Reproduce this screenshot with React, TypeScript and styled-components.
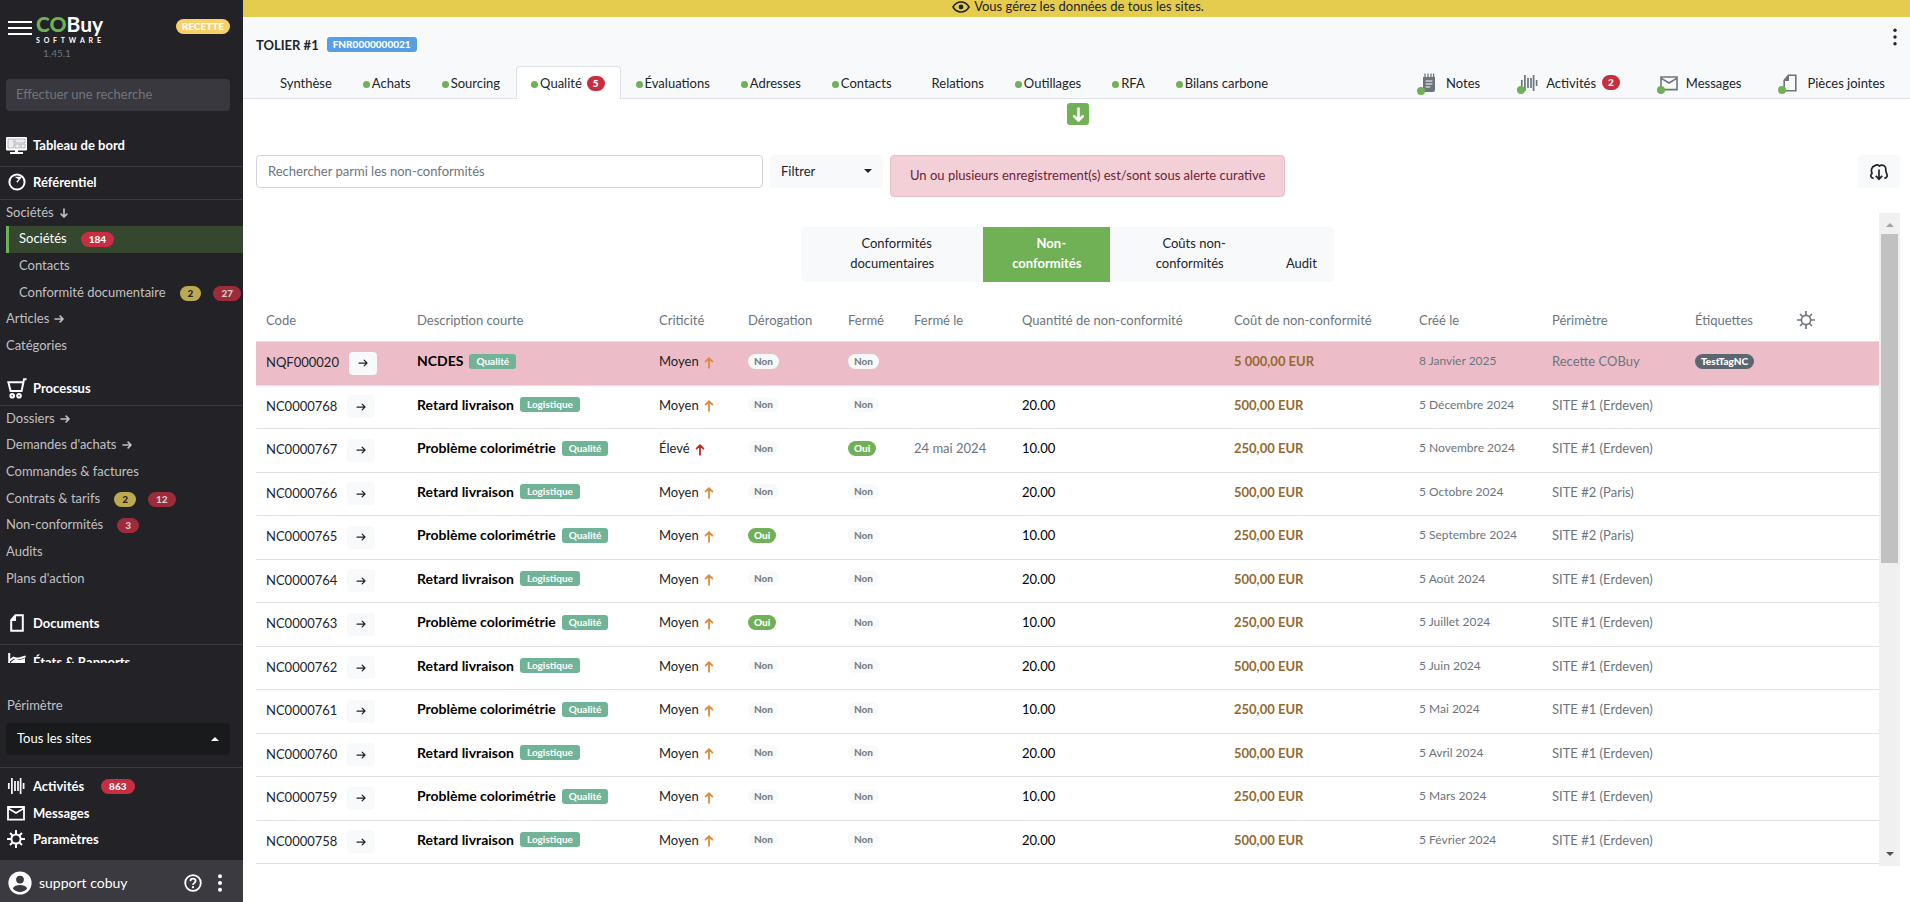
import React from "react";
import styled, { createGlobalStyle } from "styled-components";

const GlobalStyle = createGlobalStyle`
  * { box-sizing: border-box; }
  body {
    margin: 0;
    background: #fff;
    color: #212529;
    font: 13px/20px Lato, "Liberation Sans", sans-serif;
    overflow: hidden;
  }
  button, input, select { font: inherit; color: inherit; }
  a { color: inherit; text-decoration: none; }
  svg { display: block; flex: none; }
`;

/* ---------- icons ---------- */

type IconProps = { size?: number };

const Icon = ({ size = 18, children }: IconProps & { children: React.ReactNode }) => (
  <svg width={size} height={size} viewBox="0 0 18 18" fill="none" stroke="currentColor" strokeWidth="2" aria-hidden="true">
    {children}
  </svg>
);

const arrowTurn = { up: -90, right: 0, down: 90 };

const Arrow = ({ dir, size = 11, weight = 2 }: { dir: keyof typeof arrowTurn; size?: number; weight?: number }) => (
  <svg width={size} height={size} viewBox="0 0 12 12" fill="none" stroke="currentColor" strokeWidth={weight} strokeLinecap="round" strokeLinejoin="round" aria-hidden="true">
    <g transform={`rotate(${arrowTurn[dir]} 6 6)`}>
      <path d="M1.2 6H10.6M7.4 2.6L10.8 6L7.4 9.4" />
    </g>
  </svg>
);

const MonitorIcon = () => (
  <svg width="21" height="17" viewBox="0 0 21 17" aria-hidden="true">
    <rect x="0" y="0" width="21" height="13.5" rx="1" fill="#fff" />
    <path d="M2 2h6v9H2zM9 2h10v4H9zM9 7h5v4H9zM15 7h4v4h-4z" fill="#ededee" stroke="#a4a4a8" strokeWidth=".7" />
    <path d="M9 13h3v2h5v2H4v-2h5z" fill="#fff" />
  </svg>
);
const CompassIcon = () => (
  <Icon>
    <circle cx="9" cy="9" r="7.6" />
    <path d="M6.5 3.8H14L9.4 9.8L8.3 8.6L10.6 6.4Z" fill="currentColor" stroke="none" />
  </Icon>
);
const CartIcon = () => (
  <svg width="20" height="21" viewBox="0 0 20 21" fill="none" stroke="currentColor" strokeWidth="2" aria-hidden="true">
    <path d="M19.5 1.2H17L14.6 13H3.6L1.4 4.2H16" />
    <circle cx="5.2" cy="17.8" r="1.8" />
    <circle cx="12" cy="17.8" r="1.8" />
  </svg>
);
const FileIcon = ({ weight = 2 }: { weight?: number }) => (
  <Icon>
    <path d="M7.4 1.2H14.8V16.8H3.2V6.2Z" strokeWidth={weight} />
    <path d="M8 1V7H2.4Z" fill="currentColor" stroke="none" />
  </Icon>
);
const ChartIcon = () => (
  <Icon>
    <path d="M1.2 0V15M1 8L5.5 4.6L8.5 5.6L12 5.2L17.6 3.4" />
    <path d="M3 16V9l4-3 5 1 5-2v11z" fill="currentColor" stroke="none" />
  </Icon>
);
const BarsIcon = () => (
  <Icon>
    <path d="M1.8 6V12M4.9 1V17M8 4V14M11 4V14M13.6 1V17M16.6 6V12" strokeWidth="1.7" />
  </Icon>
);
const MailIcon = ({ weight = 1.8 }: { weight?: number }) => (
  <Icon>
    <path d="M1 3H17V15.6H1ZM1.4 4.4L9 9L16.6 4.4" strokeWidth={weight} />
  </Icon>
);
const GearIcon = ({ thin }: { thin?: boolean }) => (
  <Icon>
    <circle cx="9" cy="9" r="4.6" strokeWidth={thin ? 1.6 : 2} />
    <path
      d="M9 0V4.6M9 13.4V18M0 9H4.6M13.4 9H18M3 3L5.8 5.8M12.2 12.2L15 15M3 15L5.8 12.2M12.2 5.8L15 3"
      strokeWidth={thin ? 1.6 : 2}
    />
  </Icon>
);
const NoteIcon = () => (
  <svg width="18" height="20" viewBox="0 0 18 20" aria-hidden="true">
    <path d="M3 4h12v13a2 2 0 0 1-2 2H5a2 2 0 0 1-2-2z" fill="currentColor" />
    <path d="M5 0.5V5M8 0.5V5M11 0.5V5M13.6 0.5V5" stroke="currentColor" strokeWidth="1.3" />
    <path d="M5.6 8h6.8M5.6 11h6.8M5.6 14h4.6" stroke="#fff" strokeWidth="1.2" />
  </svg>
);
const EyeIcon = () => (
  <svg width="18" height="12" viewBox="0 0 18 12" fill="none" stroke="currentColor" strokeWidth="1.6" aria-hidden="true">
    <path d="M1 6C3 2.6 6 1 9 1S15 2.6 17 6C15 9.4 12 11 9 11S3 9.4 1 6Z" />
    <circle cx="9" cy="6" r="2.4" fill="currentColor" stroke="none" />
  </svg>
);
const CloudDownIcon = () => (
  <Icon>
    <path d="M3.6 15.4C0.6 14.8 0 12.6 2 10.4C0.8 7.4 1.4 3.6 5 2.6C6.6 1.4 8.4 2 9.4 3C12 1 16 2.6 15.8 6.2C15.6 7.6 16 9 16.6 10.4C17.8 12.8 17 14.8 14.4 15.4" strokeWidth="1.7" />
    <path d="M9 6.5V15.5M5.8 12.8L9 16.2L12.2 12.8" strokeWidth="1.7" />
  </Icon>
);
const UserIcon = () => (
  <svg width="24" height="24" viewBox="0 0 24 24" aria-hidden="true">
    <circle cx="12" cy="12" r="11.6" fill="#fff" />
    <circle cx="12" cy="8.6" r="3.9" fill="#3b3a40" />
    <path d="M4.8 17.6C6 14.8 9 14 12 14S18 14.8 19.2 17.6C17.4 20 15 21 12 21S6.6 20 4.8 17.6Z" fill="#3b3a40" />
  </svg>
);
const HelpIcon = () => (
  <Icon>
    <circle cx="9" cy="9" r="7.8" strokeWidth="1.8" />
    <path d="M6.4 7.2C6.4 3.8 11.6 4 11.6 7C11.6 8.8 9 9 9 11" strokeWidth="1.8" />
    <circle cx="9" cy="13.2" r="1.1" fill="currentColor" stroke="none" />
  </Icon>
);
const KebabIcon = ({ dot = 2 }: { dot?: number }) => (
  <svg width="6" height="18" viewBox="0 0 6 18" fill="currentColor" aria-hidden="true">
    <circle cx="3" cy="2.2" r={dot} />
    <circle cx="3" cy="9" r={dot} />
    <circle cx="3" cy="15.8" r={dot} />
  </svg>
);
const Caret = ({ up }: { up?: boolean }) => (
  <svg width="8" height="4" viewBox="0 0 8 4" fill="currentColor" aria-hidden="true">
    <path d={up ? "M0 4L4 0L8 4Z" : "M0 0L4 4L8 0Z"} />
  </svg>
);

/* ---------- shared parts ---------- */

const badgeColors = {
  red: ["#c92e40", "#fff"],
  dimRed: ["#9e2b3a", "#d3c9cc"],
  dimYellow: ["#bcaa50", "#26262a"],
  amber: ["#f9cf68", "#fff"],
  blue: ["#569fe4", "#fff"],
  teal: ["#70b397", "#fff"],
  green: ["#6fb154", "#fff"],
  slate: ["#5c6670", "#fff"],
  light: ["#f8f9fa", "#7a8288"],
};

const Badge = styled.span<{ $tone: keyof typeof badgeColors; $square?: boolean; $tight?: boolean }>`
  display: inline-block;
  flex: none;
  padding: 0 ${(p) => (p.$tight ? 6 : 8)}px;
  border-radius: ${(p) => (p.$square ? 3 : 8)}px;
  background: ${(p) => badgeColors[p.$tone][0]};
  color: ${(p) => badgeColors[p.$tone][1]};
  font-size: 10px;
  font-weight: 900;
  line-height: 15px;
  white-space: nowrap;
`;

const TopicBadge = styled(Badge)`
  padding: 0 7px;
  font-weight: 700;
`;

const IconButton = styled.button`
  display: flex;
  align-items: center;
  justify-content: center;
  padding: 0;
  border: 0;
  background: none;
  cursor: pointer;
`;

const Shell = styled.div`
  display: flex;
  height: 100vh;
`;

/* ---------- sidebar ---------- */

const Sidebar = styled.aside`
  display: flex;
  flex-direction: column;
  flex: none;
  width: 243px;
  background: #232227;
  color: #c0c0c3;
`;

const Brand = styled.div`
  display: flex;
  align-items: flex-start;
  height: 79px;
  padding: 14px 13px 0 8px;
`;

const Burger = styled(IconButton)`
  flex-direction: column;
  justify-content: space-between;
  width: 24px;
  height: 14px;
  margin: 7px 4px 0 0;
  span { width: 100%; height: 2px; background: #fff; }
`;

const Logo = styled.div`
  flex: 1;
  color: #fff;
`;
const LogoName = styled.div`
  font-size: 21px;
  line-height: 20px;
  font-weight: 700;
  b { color: #6fb154; }
`;
const LogoSub = styled.div`
  font-size: 7px;
  font-weight: 700;
  line-height: 12px;
  display: flex;
  justify-content: space-between;
  width: 65px;
`;
const Version = styled.div`
  padding-left: 7px;
  color: #6c757d;
  font-size: 10px;
  line-height: 14px;
`;
const EnvBadge = styled(Badge)`
  margin-top: 5px;
`;

const SideSearch = styled.input`
  height: 32px;
  margin: 0 13px 15px 6px;
  padding: 0 10px 2px;
  border: 0;
  border-radius: 4px;
  background: #39383e;
  &::placeholder { color: #70757c; opacity: 1; }
`;

const Nav = styled.nav`
  flex: 1;
  min-height: 0;
  overflow: hidden;
`;

const Section = styled.a<{ $tall?: boolean; $gap?: number }>`
  display: flex;
  align-items: center;
  gap: 6px;
  height: ${(p) => (p.$tall ? 41 : 33)}px;
  margin-top: ${(p) => p.$gap ?? 0}px;
  padding: 0 6px 2px;
  border-bottom: 1px solid #3b3a40;
  color: #fff;
  font-weight: 700;
  span { display: flex; justify-content: center; width: 21px; }
`;

const Items = styled.ul`
  margin: 0;
  padding: 0;
  list-style: none;
`;
const Item = styled.li<{ $level?: number; $active?: boolean }>`
  margin-left: 6px;
  padding-left: ${(p) => (p.$level ? (p.$active ? 10 : 13) : 0)}px;
  border-left: ${(p) => (p.$active ? "3px solid #6fb154" : "0")};
  background: ${(p) => (p.$active ? "#35472f" : "none")};
  color: ${(p) => (p.$active ? "#fff" : "inherit")};
  height: 27px;
  overflow: hidden;
  &:nth-child(3n + 1) { height: 26px; }
  a {
    display: flex;
    align-items: center;
    height: 24px;
    white-space: nowrap;
  }
  svg { margin: 2px 0 0 5px; }
  ${Badge} { margin: 3px 0 0 14px; }
  ${Badge} + ${Badge} { margin-left: 12px; }
`;

const Scope = styled.div`
  padding: 32px 13px 12px 6px;
  border-bottom: 1px solid #3b3a40;
`;
const ScopeLabel = styled.label`
  display: block;
  padding-left: 1px;
  line-height: 21px;
  margin-bottom: 7px;
`;
const SelectBox = styled.div`
  display: flex;
  align-items: center;
  height: 32px;
  padding-right: 11px;
  border-radius: 4px;
  background: #181a1b;
  color: #fff;
`;
const PlainSelect = styled.select`
  flex: 1;
  min-width: 0;
  height: 100%;
  padding: 0 11px 2px;
  border: 0;
  outline: 0;
  background: none;
  appearance: none;
`;

const Links = styled.div`
  padding: 6px 0 7px;
`;
const QuickLink = styled.a`
  display: flex;
  align-items: center;
  height: 26px;
  padding: 0 0 2px 7px;
  color: #fff;
  font-weight: 700;
  &:nth-child(2) { height: 27px; }
  svg { margin-right: 8px; }
  ${Badge} { margin-left: 17px; }
`;

const Account = styled.div`
  display: flex;
  align-items: center;
  height: 42px;
  padding: 4px 20px 0 8px;
  background: #3b3a40;
  color: #fff;
  font-size: 14px;
  span { flex: 1; padding-left: 7px; }
`;
const AccountButton = styled(IconButton)`
  margin-left: 15px;
`;

/* ---------- main ---------- */

const Main = styled.main`
  display: flex;
  flex-direction: column;
  flex: 1;
  min-width: 0;
`;

const Notice = styled.div`
  display: flex;
  justify-content: center;
  align-items: flex-start;
  gap: 4px;
  height: 17px;
  padding-left: 3px;
  line-height: 13px;
  background: #e6cc4d;
  svg { margin-top: 1px; }
`;

const Header = styled.header`
  background: #f8f9fb;
  border-bottom: 1px solid #dee2e6;
`;
const TitleRow = styled.div`
  display: flex;
  align-items: flex-start;
  gap: 8px;
  height: 49px;
  padding: 11px 12px 0 13px;
`;
const Title = styled.h1`
  margin: 7px 0 0;
  font-size: 13px;
  line-height: 20px;
`;
const Reference = styled(Badge)`
  margin: 9px auto 0 0;
`;

const TabRow = styled.div`
  display: flex;
  margin-bottom: -1px;
  padding: 0 25px 0 13px;
`;
const Tab = styled.a<{ $active?: boolean }>`
  display: flex;
  align-items: center;
  height: 33px;
  padding: 0 15px 0 14px;
  border: 1px solid ${(p) => (p.$active ? "#dee2e6" : "transparent")};
  border-bottom: 0;
  border-radius: 4px 4px 0 0;
  background: ${(p) => (p.$active ? "#fff" : "none")};
  white-space: nowrap;
  ${Badge} { margin-left: 5px; }
`;
const Dot = styled.i<{ $off?: boolean }>`
  display: inline-block;
  width: 7px;
  height: 7px;
  margin: 2px 2px 0 0;
  border-radius: 50%;
  background: ${(p) => (p.$off ? "transparent" : "#6fb154")};
`;
const Tools = styled.div`
  display: flex;
  gap: 40px;
  margin-left: auto;
`;
const Tool = styled.a`
  display: flex;
  align-items: center;
  height: 33px;
  white-space: nowrap;
  ${Badge} { margin-left: 6px; }
`;
const ToolIcon = styled.span`
  position: relative;
  display: flex;
  margin-right: 8px;
  color: #6c757d;
  &::after {
    content: "";
    position: absolute;
    left: -3px;
    bottom: -2px;
    width: 8px;
    height: 8px;
    border-radius: 50%;
    background: #6fb154;
  }
`;

const Content = styled.section`
  display: flex;
  flex-direction: column;
  flex: 1;
  min-height: 0;
  padding: 4px 10px 36px 13px;
`;
const ExpandButton = styled(IconButton)`
  width: 22px;
  height: 22px;
  margin: 0 auto;
  border-radius: 3px;
  background: #6fb154;
  color: #fff;
`;
const Toolbar = styled.div`
  display: flex;
  align-items: flex-start;
  gap: 7px;
  margin: 30px 0 16px;
`;
const Search = styled.input`
  flex: 0 1 507px;
  height: 33px;
  padding: 0 11px 2px;
  border: 1px solid #ced4da;
  border-radius: 4px;
  &::placeholder { color: #6c757d; opacity: 1; }
`;
const FilterButton = styled(IconButton)`
  justify-content: space-between;
  width: 113px;
  height: 33px;
  padding: 0 11px 2px;
  border-radius: 4px;
  background: #f8f9fb;
`;
const Alert = styled.div`
  padding: 9px 19px 11px;
  border: 1px solid #ecbdc8;
  border-radius: 4px;
  background: #f3d0d7;
  color: #6f2334;
`;
const ExportButton = styled(IconButton)`
  width: 42px;
  height: 33px;
  margin-left: auto;
  border-radius: 4px;
  background: #f8f9fb;
`;

const ScrollArea = styled.div`
  display: flex;
  flex: 1;
  min-height: 0;
`;
const ScrollBody = styled.div`
  flex: 1;
  min-width: 0;
  overflow: hidden;
`;
const ScrollTrack = styled.div`
  display: flex;
  flex-direction: column;
  align-items: center;
  justify-content: space-between;
  width: 21px;
  padding: 10px 0;
  background: #f0f0f0;
  color: #505050;
  svg:first-child { color: #a3a3a3; }
`;
const ScrollThumb = styled.div`
  width: 17px;
  height: 52%;
  margin: 7px 0 auto;
  background: #c1c1c1;
`;

const Switcher = styled.div`
  display: flex;
  width: max-content;
  margin: 14px auto 18px;
  border-radius: 4px;
  background: #f8f9fb;
  overflow: hidden;
`;
const SwitchButton = styled.button<{ $pad: number; $active?: boolean }>`
  display: flex;
  align-items: flex-end;
  height: 55px;
  padding: 0 ${(p) => p.$pad}px 9px;
  border: 0;
  background: ${(p) => (p.$active ? "#6fb154" : "none")};
  color: ${(p) => (p.$active ? "#fff" : "inherit")};
  font-weight: ${(p) => (p.$active ? 700 : 400)};
  text-align: center;
  cursor: pointer;
`;

const Grid = styled.table`
  width: 100%;
  table-layout: fixed;
  border-collapse: collapse;
  th, td {
    padding: 0 10px;
    border-bottom: 1px solid #dee2e6;
    text-align: left;
    white-space: nowrap;
  }
  th {
    height: 41px;
    color: #6c757d;
    font-weight: 400;
  }
`;
const Row = styled.tr<{ $alert?: boolean }>`
  height: 43px;
  background: ${(p) => (p.$alert ? "#ecbdc8" : "none")};
  &:nth-child(odd) { height: 44px; }
`;
const Inline = styled.div`
  display: flex;
  align-items: center;
  padding-bottom: 4px;
`;
const Code = styled(Inline)`
  padding-bottom: 2px;
`;
const OpenButton = styled(IconButton)`
  width: 28px;
  height: 23px;
  margin: 2px 0 0 10px;
  border-radius: 4px;
  background: #f8f9fb;
`;
const Description = styled(Inline)`
  gap: 6px;
  color: #000;
  font-size: 14px;
  font-weight: 700;
`;
const Level = styled(Inline)<{ $high?: boolean }>`
  gap: 4px;
  svg { margin-top: 3px; color: ${(p) => (p.$high ? "#c62a1c" : "#e08a3c")}; }
`;
const Muted = styled(Inline)<{ $small?: boolean }>`
  color: #6c757d;
  font-size: ${(p) => (p.$small ? 12 : 13)}px;
`;
const Quantity = styled(Inline)`
  color: #000;
`;
const Cost = styled(Inline)`
  color: #95692f;
  font-weight: 700;
`;
const ColumnSettings = styled(IconButton)`
  color: #6c757d;
`;

/* ---------- data ---------- */

const tabs: { label: string; dot?: boolean; count?: number; active?: boolean }[] = [
  { label: "Synthèse" },
  { label: "Achats", dot: true },
  { label: "Sourcing", dot: true },
  { label: "Qualité", dot: true, count: 5, active: true },
  { label: "Évaluations", dot: true },
  { label: "Adresses", dot: true },
  { label: "Contacts", dot: true },
  { label: "Relations" },
  { label: "Outillages", dot: true },
  { label: "RFA", dot: true },
  { label: "Bilans carbone", dot: true },
];

const tools = [
  { label: "Notes", icon: <NoteIcon /> },
  { label: "Activités", icon: <BarsIcon />, count: 2 },
  { label: "Messages", icon: <MailIcon weight={1.6} /> },
  { label: "Pièces jointes", icon: <FileIcon weight={1.6} /> },
];

const columns: [string, number][] = [
  ["Code", 151],
  ["Description courte", 242],
  ["Criticité", 89],
  ["Dérogation", 100],
  ["Fermé", 66],
  ["Fermé le", 108],
  ["Quantité de non-conformité", 212],
  ["Coût de non-conformité", 185],
  ["Créé le", 133],
  ["Périmètre", 143],
  ["Étiquettes", 102],
  ["", 92],
];

type NonConformity = {
  code: string;
  kind: "NCDES" | "Retard livraison" | "Problème colorimétrie";
  created: string;
  site: string;
  high?: boolean;
  waived?: boolean;
  closed?: string;
  tag?: string;
};

const ERDEVEN = "SITE #1 (Erdeven)";
const PARIS = "SITE #2 (Paris)";
const LATE = "Retard livraison";
const COLOR = "Problème colorimétrie";

const kinds = {
  NCDES: { topic: "Qualité", quantity: "", cost: "5 000,00 EUR" },
  [LATE]: { topic: "Logistique", quantity: "20.00", cost: "500,00 EUR" },
  [COLOR]: { topic: "Qualité", quantity: "10.00", cost: "250,00 EUR" },
};

const records: NonConformity[] = [
  { code: "NQF000020", kind: "NCDES", created: "8 Janvier 2025", site: "Recette COBuy", tag: "TestTagNC" },
  { code: "NC0000768", kind: LATE, created: "5 Décembre 2024", site: ERDEVEN },
  { code: "NC0000767", kind: COLOR, created: "5 Novembre 2024", site: ERDEVEN, high: true, closed: "24 mai 2024" },
  { code: "NC0000766", kind: LATE, created: "5 Octobre 2024", site: PARIS },
  { code: "NC0000765", kind: COLOR, created: "5 Septembre 2024", site: PARIS, waived: true },
  { code: "NC0000764", kind: LATE, created: "5 Août 2024", site: ERDEVEN },
  { code: "NC0000763", kind: COLOR, created: "5 Juillet 2024", site: ERDEVEN, waived: true },
  { code: "NC0000762", kind: LATE, created: "5 Juin 2024", site: ERDEVEN },
  { code: "NC0000761", kind: COLOR, created: "5 Mai 2024", site: ERDEVEN },
  { code: "NC0000760", kind: LATE, created: "5 Avril 2024", site: ERDEVEN },
  { code: "NC0000759", kind: COLOR, created: "5 Mars 2024", site: ERDEVEN },
  { code: "NC0000758", kind: LATE, created: "5 Février 2024", site: ERDEVEN },
];

const YesNo = ({ value }: { value?: boolean }) => (
  <Inline>
    <Badge $tone={value ? "green" : "light"} $tight>{value ? "Oui" : "Non"}</Badge>
  </Inline>
);

const SideNav = () => (
  <Nav aria-label="Navigation principale">
    <Section href="#" $tall><span><MonitorIcon /></span>Tableau de bord</Section>
    <Section href="#"><span><CompassIcon /></span>Référentiel</Section>
    <Items>
      <Item><a href="#">Sociétés <Arrow dir="down" size={10} /></a></Item>
      <Item $level={1} $active><a href="#">Sociétés <Badge $tone="red">184</Badge></a></Item>
      <Item $level={1}><a href="#">Contacts</a></Item>
      <Item $level={1}>
        <a href="#">Conformité documentaire <Badge $tone="dimYellow">2</Badge><Badge $tone="dimRed">27</Badge></a>
      </Item>
      <Item><a href="#">Articles <Arrow dir="right" size={10} /></a></Item>
      <Item><a href="#">Catégories</a></Item>
    </Items>
    <Section href="#" $gap={13}><span><CartIcon /></span>Processus</Section>
    <Items>
      <Item><a href="#">Dossiers <Arrow dir="right" size={10} /></a></Item>
      <Item><a href="#">Demandes d'achats <Arrow dir="right" size={10} /></a></Item>
      <Item><a href="#">Commandes &amp; factures</a></Item>
      <Item><a href="#">Contrats &amp; tarifs <Badge $tone="dimYellow">2</Badge><Badge $tone="dimRed">12</Badge></a></Item>
      <Item><a href="#">Non-conformités <Badge $tone="dimRed">3</Badge></a></Item>
      <Item><a href="#">Audits</a></Item>
      <Item><a href="#">Plans d'action</a></Item>
    </Items>
    <Section href="#" $tall $gap={12}><span><FileIcon /></span>Documents</Section>
    <Section href="#" $gap={2}><span><ChartIcon /></span>États &amp; Rapports</Section>
  </Nav>
);

export default function App() {
  return (
    <>
      <GlobalStyle />
      <Shell>
        <Sidebar>
          <Brand>
            <Burger aria-label="Menu"><span /><span /><span /></Burger>
            <Logo>
              <LogoName><b>CO</b>Buy</LogoName>
              <LogoSub>{[..."SOFTWARE"].map((letter, i) => <span key={i}>{letter}</span>)}</LogoSub>
              <Version>1.45.1</Version>
            </Logo>
            <EnvBadge $tone="amber" $tight>RECETTE</EnvBadge>
          </Brand>
          <SideSearch aria-label="Effectuer une recherche" placeholder="Effectuer une recherche" />
          <SideNav />
          <Scope>
            <ScopeLabel htmlFor="scope">Périmètre</ScopeLabel>
            <SelectBox>
              <PlainSelect id="scope"><option>Tous les sites</option></PlainSelect>
              <Caret up />
            </SelectBox>
          </Scope>
          <Links>
            <QuickLink href="#"><BarsIcon />Activités<Badge $tone="red">863</Badge></QuickLink>
            <QuickLink href="#"><MailIcon />Messages</QuickLink>
            <QuickLink href="#"><GearIcon />Paramètres</QuickLink>
          </Links>
          <Account>
            <UserIcon />
            <span>support cobuy</span>
            <AccountButton aria-label="Aide"><HelpIcon /></AccountButton>
            <AccountButton aria-label="Options du compte"><KebabIcon /></AccountButton>
          </Account>
        </Sidebar>

        <Main>
          <Notice><EyeIcon />Vous gérez les données de tous les sites.</Notice>
          <Header>
            <TitleRow>
              <Title>TOLIER #1</Title>
              <Reference $tone="blue" $square $tight>FNR0000000021</Reference>
              <IconButton aria-label="Actions"><KebabIcon dot={1.7} /></IconButton>
            </TitleRow>
            <TabRow>
              {tabs.map((tab) => (
                <Tab href="#" key={tab.label} $active={tab.active}>
                  <Dot $off={!tab.dot} />
                  {tab.label}
                  {tab.count && <Badge $tone="red" $tight>{tab.count}</Badge>}
                </Tab>
              ))}
              <Tools>
                {tools.map((tool) => (
                  <Tool href="#" key={tool.label}>
                    <ToolIcon>{tool.icon}</ToolIcon>
                    {tool.label}
                    {tool.count && <Badge $tone="red" $tight>{tool.count}</Badge>}
                  </Tool>
                ))}
              </Tools>
            </TabRow>
          </Header>

          <Content>
            <ExpandButton aria-label="Déplier"><Arrow dir="down" size={15} /></ExpandButton>
            <Toolbar>
              <Search aria-label="Rechercher" placeholder="Rechercher parmi les non-conformités" />
              <FilterButton>Filtrer<Caret /></FilterButton>
              <Alert role="alert">Un ou plusieurs enregistrement(s) est/sont sous alerte curative</Alert>
              <ExportButton aria-label="Exporter"><CloudDownIcon /></ExportButton>
            </Toolbar>
            <ScrollArea>
              <ScrollBody>
                <Switcher>
                  <SwitchButton $pad={49}><span><Dot $off />Conformités<br />documentaires</span></SwitchButton>
                  <SwitchButton $pad={29} $active><span><Dot $off />Non-<br />conformités</span></SwitchButton>
                  <SwitchButton $pad={43}><span><Dot $off />Coûts non-<br />conformités</span></SwitchButton>
                  <SwitchButton $pad={17}>Audit</SwitchButton>
                </Switcher>
                <Grid>
                  <colgroup>
                    {columns.map(([label, width]) => <col key={label} width={width} />)}
                  </colgroup>
                  <thead>
                    <tr>
                      {columns.map(([label]) => (
                        <th key={label} scope="col">
                          {label || <ColumnSettings aria-label="Colonnes"><GearIcon thin /></ColumnSettings>}
                        </th>
                      ))}
                    </tr>
                  </thead>
                  <tbody>
                    {records.map((r) => (
                      <Row key={r.code} $alert={r.kind === "NCDES"}>
                        <td>
                          <Code>
                            {r.code}
                            <OpenButton aria-label={`Ouvrir ${r.code}`}><Arrow dir="right" size={10} weight={1.5} /></OpenButton>
                          </Code>
                        </td>
                        <td><Description>{r.kind}<TopicBadge $tone="teal" $square>{kinds[r.kind].topic}</TopicBadge></Description></td>
                        <td><Level $high={r.high}>{r.high ? "Élevé" : "Moyen"}<Arrow dir="up" size={12} weight={1.8} /></Level></td>
                        <td><YesNo value={r.waived} /></td>
                        <td><YesNo value={!!r.closed} /></td>
                        <td><Muted>{r.closed}</Muted></td>
                        <td><Quantity>{kinds[r.kind].quantity}</Quantity></td>
                        <td><Cost>{kinds[r.kind].cost}</Cost></td>
                        <td><Muted $small>{r.created}</Muted></td>
                        <td><Muted>{r.site}</Muted></td>
                        <td>{r.tag && <Inline><Badge $tone="slate" $tight>{r.tag}</Badge></Inline>}</td>
                        <td />
                      </Row>
                    ))}
                  </tbody>
                </Grid>
              </ScrollBody>
              <ScrollTrack aria-hidden="true">
                <Caret up />
                <ScrollThumb />
                <Caret />
              </ScrollTrack>
            </ScrollArea>
          </Content>
        </Main>
      </Shell>
    </>
  );
}
